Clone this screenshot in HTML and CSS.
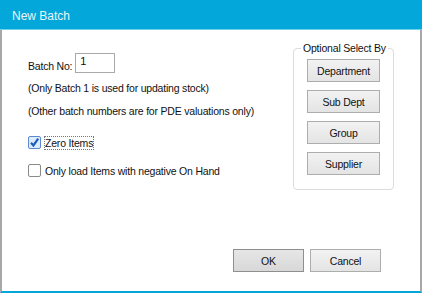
FILE: index.html
```html
<!DOCTYPE html>
<html>
<head>
<meta charset="utf-8">
<title>New Batch</title>
<link rel="stylesheet" href="styles.css">
</head>
<body>
<div class="dialog">
	<div class="titlebar">New Batch</div>
	<div class="client">
		<div class="main">
			<div class="left">
				<div class="batch">
					<span>Batch No:</span>
					<span class="edit">1</span>
				</div>
				<div class="note">(Only Batch 1 is used for updating stock)</div>
				<div class="note">(Other batch numbers are for PDE valuations only)</div>
				<div class="check first">
					<span class="box checked">
						<svg width="11" height="11" viewBox="0 0 11 11"><path d="M2 5.8 L4.4 8.4 L9.2 1.6" fill="none" stroke="#1f5fb4" stroke-width="2.2"/></svg>
					</span>
					<span class="focus">Zero Items</span>
				</div>
				<div class="check">
					<span class="box"></span>
					<span>Only load Items with negative On Hand</span>
				</div>
			</div>
			<fieldset class="group">
				<legend>Optional Select By</legend>
				<button class="btn">Department</button>
				<button class="btn">Sub Dept</button>
				<button class="btn">Group</button>
				<button class="btn">Supplier</button>
			</fieldset>
		</div>
		<div class="footer">
			<button class="btn wide default">OK</button>
			<button class="btn wide">Cancel</button>
		</div>
	</div>
</div>
</body>
</html>
```

FILE: styles.css
```css
* {
font-family: "Liberation Sans", Arial, sans-serif;
box-sizing: border-box;
}
body {
margin: 0;
background: #fff;
}
.dialog {
width: 422px;
height: 293px;
display: flex;
flex-direction: column;
}
.titlebar {
height: 30px;
background: #03a7d9;
border-bottom: 1px solid #6fd0ee;
color: #e8f6fb;
font-size: 12px;
padding: 9px 0 0 12px;
}
.client {
flex: 1;
border-left: 2px solid #a8a8a8;
border-right: 2px solid #a8a8a8;
border-bottom: 2px solid #03a7d9;
display: flex;
flex-direction: column;
}
.main {
display: flex;
justify-content: space-between;
padding: 12px 26px 0 26px;
}
.left {
padding-top: 11px;
font-size: 10.5px;
letter-spacing: -0.2px;
color: #111;
}
.batch {
display: flex;
align-items: center;
gap: 3px;
height: 20px;
}
.batch span:first-child {
padding-top: 6px;
}
.edit {
width: 40px;
height: 20px;
border: 1px solid #a9a9a9;
padding: 0 0 0 4px;
font-size: 11px;
line-height: 15px;
}
.note {
margin-top: 8px;
line-height: 15px;
}
.check {
display: flex;
align-items: center;
gap: 4px;
margin-top: 15px;
height: 13px;
}
.check.first {
margin-top: 17px;
}
.box {
width: 13px;
height: 13px;
border: 1px solid #8a8a8a;
border-radius: 2px;
background: #fff;
display: flex;
align-items: center;
justify-content: center;
}
.box.checked {
background: #dcecfc;
border-color: #5a8ad0;
}
.focus {
outline: 1px dotted #777;
outline-offset: 0;
}
.group {
width: 101px;
height: 148px;
margin: 0;
padding: 5px 0 0 0;
border: 1px solid #dcdcdc;
border-radius: 4px;
display: flex;
flex-direction: column;
align-items: center;
gap: 8px;
}
.group legend {
font-size: 10.5px;
letter-spacing: -0.2px;
color: #111;
padding: 0 2px;
margin-left: 7px;
}
.btn {
width: 73px;
height: 23px;
border: 1px solid #adadad;
background: linear-gradient(#f2f2f2, #e4e4e4);
font-size: 10.5px;
letter-spacing: -0.2px;
color: #111;
padding: 0;
}
.footer {
margin-top: auto;
display: flex;
justify-content: flex-end;
gap: 6px;
padding: 0 39px 19px 0;
}
.btn.wide {
width: 71px;
}
.btn.default {
border-color: #8f8f8f;
background: linear-gradient(#e6e6e6, #d8d8d8);
}
```
